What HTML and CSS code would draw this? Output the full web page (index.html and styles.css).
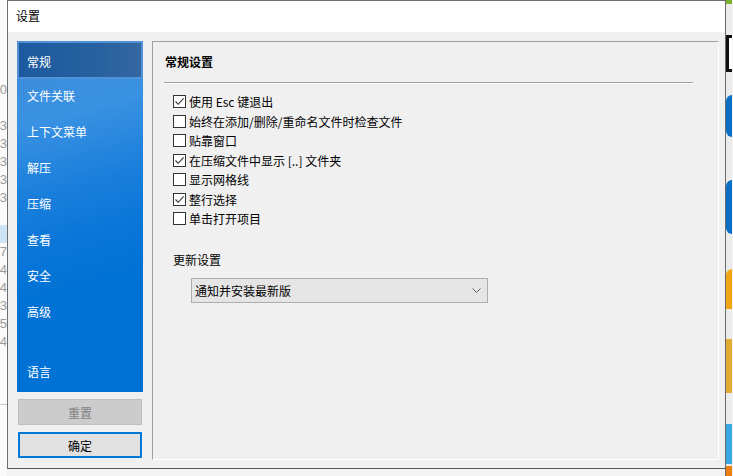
FILE: index.html
```html
<!DOCTYPE html>
<html lang="zh-CN">
<head>
<meta charset="utf-8">
<title>设置</title>
<link rel="stylesheet" href="styles.css">
</head>
<body>
<div class="desktop">
  <div class="bg-left">
    <div class="bg-row"><span>20</span></div>
    <div class="bg-row"><span></span></div>
    <div class="bg-row"><span>03</span></div>
    <div class="bg-row"><span>03</span></div>
    <div class="bg-row"><span>03</span></div>
    <div class="bg-row"><span>03</span></div>
    <div class="bg-row"><span>03</span></div>
    <div class="bg-row"><span></span></div>
    <div class="bg-row sel"><span></span></div>
    <div class="bg-row"><span>07</span></div>
    <div class="bg-row"><span>04</span></div>
    <div class="bg-row"><span>04</span></div>
    <div class="bg-row"><span>03</span></div>
    <div class="bg-row"><span>05</span></div>
    <div class="bg-row"><span>04</span></div>
    <div class="bg-end"></div>
  </div>

  <div class="dialog">
    <div class="titlebar">设置</div>
    <div class="dlg-body">
      <div class="side">
        <nav class="nav">
          <div class="nav-item active">常规</div>
          <div class="nav-item">文件关联</div>
          <div class="nav-item">上下文菜单</div>
          <div class="nav-item">解压</div>
          <div class="nav-item">压缩</div>
          <div class="nav-item">查看</div>
          <div class="nav-item">安全</div>
          <div class="nav-item">高级</div>
          <div class="nav-item lang">语言</div>
        </nav>
        <button class="btn btn-disabled">重置</button>
        <button class="btn btn-default">确定</button>
      </div>

      <section class="group">
        <h2 class="group-title">常规设置</h2>
        <div class="sep"></div>
        <ul class="checks">
          <li class="check"><span class="box"><svg viewBox="0 0 13 13" width="13" height="13"><polyline points="2.5,6.5 5.2,9.3 10.6,3.4" fill="none" stroke="#333" stroke-width="1.1"/></svg></span>使用 Esc 键退出</li>
          <li class="check"><span class="box"></span>始终在添加/删除/重命名文件时检查文件</li>
          <li class="check"><span class="box"></span>贴靠窗口</li>
          <li class="check"><span class="box"><svg viewBox="0 0 13 13" width="13" height="13"><polyline points="2.5,6.5 5.2,9.3 10.6,3.4" fill="none" stroke="#333" stroke-width="1.1"/></svg></span>在压缩文件中显示 [..] 文件夹</li>
          <li class="check"><span class="box"></span>显示网格线</li>
          <li class="check"><span class="box"><svg viewBox="0 0 13 13" width="13" height="13"><polyline points="2.5,6.5 5.2,9.3 10.6,3.4" fill="none" stroke="#333" stroke-width="1.1"/></svg></span>整行选择</li>
          <li class="check"><span class="box"></span>单击打开项目</li>
        </ul>
        <div class="update-label">更新设置</div>
        <div class="select">
          <span>通知并安装最新版</span>
          <svg class="chev" viewBox="0 0 9 5" width="9" height="5"><polyline points="0.5,0.5 4.5,4.5 8.5,0.5" fill="none" stroke="#606060" stroke-width="1"/></svg>
        </div>
      </section>
    </div>
  </div>

  <div class="bg-right">
    <div class="ic ic-green"></div>
    <div class="ic ic-box"></div>
    <div class="ic ic-blue1"></div>
    <div class="ic ic-blue2"></div>
    <div class="ic ic-orange"></div>
    <div class="ic ic-gold"></div>
    <div class="ic ic-sky"></div>
    <div class="ic ic-bottom"></div>
  </div>
</div>
</body>
</html>
```

FILE: styles.css
```css
* { box-sizing: border-box; }
html, body { margin: 0; padding: 0; }
body {
  width: 733px;
  height: 476px;
  overflow: hidden;
  background: #f3f3f3;
  font-family: "Noto Sans CJK SC", "Noto Sans", "Liberation Sans", sans-serif;
  font-size: 12px;
  color: #000;
}
.desktop {
  display: flex;
  width: 733px;
  height: 476px;
}

/* background strips */
.bg-left {
  width: 7px;
  flex: none;
  background: #fafafa;
  padding-top: 81px;
  overflow: hidden;
}
.bg-row {
  height: 18px;
  display: flex;
  justify-content: flex-end;
  overflow: hidden;
  color: #9a9a9a;
  font-family: "Liberation Sans", sans-serif;
  font-size: 13px;
  line-height: 18px;
}
.bg-row span { flex: none; }
.bg-row.sel { background: #cde3f6; }
.bg-end {
  height: 1px;
  margin-top: 53px;
  background: #c8c8c8;
}

.bg-right {
  width: 7px;
  flex: none;
  background: #ececec;
  display: flex;
  flex-direction: column;
  border-left: 1px solid #6a6a6a;
}
.ic { flex: none; }
.ic-green { height: 4px; background: #7bb32e; margin-bottom: 31px; }
.ic-box { height: 37px; border: 3px solid #111; border-right: none; background: #fff; margin-bottom: 23px; }
.ic-blue1 { height: 42px; background: #0b6fc6; border-radius: 20px 0 0 20px; margin-bottom: 43px; }
.ic-blue2 { height: 54px; background: #0b6fc6; border-radius: 26px 0 0 26px; margin-bottom: 35px; }
.ic-orange { height: 40px; background: #f1a414; border-radius: 6px 0 0 0; margin-bottom: 30px; }
.ic-gold { height: 54px; background: #e0ac34; margin-bottom: 31px; }
.ic-sky { height: 40px; background: #3aa9e2; }
.ic-bottom { flex: 1; background: #ed7e12; margin-top: 2px; }

/* dialog window */
.dialog {
  width: 718px;
  height: 469px;
  flex: none;
  border: 1px solid #6e6e6e;
  border-right: none;
  border-bottom-color: #555;
  background: #f0f0f0;
  display: flex;
  flex-direction: column;
}
.titlebar {
  height: 31px;
  flex: none;
  background: #fff;
  padding-left: 8px;
  line-height: 29px;
  font-size: 12px;
}
.dlg-body {
  flex: 1;
  display: flex;
  gap: 9px;
  padding: 9px 0 0 9px;
}

/* sidebar */
.side {
  width: 126px;
  flex: none;
  display: flex;
  flex-direction: column;
  align-items: center;
}
.nav {
  width: 126px;
  height: 351px;
  background: linear-gradient(165deg, #3f8ad6 0%, #3a92e2 22%, #1c80dc 40%, #0a76d8 55%, #0072d5 70%);
  display: flex;
  flex-direction: column;
  padding-top: 0;
}
.nav-item {
  height: 36px;
  flex: none;
  padding-left: 10px;
  line-height: 36px;
  color: #fff;
  font-size: 12px;
}
.nav-item.active {
  height: 38px;
  line-height: 38px;
  margin-bottom: -1px;
  background: linear-gradient(90deg, #1c5a9f 0%, #26609f 60%, #3567a2 100%);
  border: 2px solid #4f92d8;
  padding-left: 8px;
}
.nav-item.lang { margin-top: 24px; }

.btn {
  width: 124px;
  height: 26px;
  font-family: inherit;
  font-size: 12px;
  padding: 0;
}
.btn-disabled {
  margin-top: 7px;
  background: #cccccc;
  border: 1px solid #bfbfbf;
  color: #838383;
}
.btn-default {
  margin-top: 7px;
  background: #e1e1e1;
  border: 2px solid #0078d7;
  color: #000;
}

/* group box */
.group {
  width: 567px;
  height: 419px;
  flex: none;
  border-top: 1px solid #a0a0a0;
  border-left: 1px solid #a0a0a0;
  border-right: 1px solid #ffffff;
  border-bottom: 1px solid #ffffff;
  padding: 0;
}
.group-title {
  margin: 10px 0 0 12px;
  font-size: 12px;
  font-weight: bold;
  line-height: 20px;
}
.sep {
  margin: 10px 25px 0 11px;
  height: 2px;
  border-top: 1px solid #a0a0a0;
  border-bottom: 1px solid #ffffff;
}
.checks {
  list-style: none;
  margin: 8px 0 0 0;
  padding: 0 0 0 20px;
}
.check {
  height: 19.5px;
  display: flex;
  align-items: center;
  gap: 3px;
  line-height: 19px;
}
.box {
  width: 13px;
  height: 13px;
  flex: none;
  border: 1px solid #333;
  background: #fff;
  position: relative;
}
.box svg {
  position: absolute;
  left: -1px;
  top: -1px;
}
.update-label {
  margin: 21px 0 0 20px;
  line-height: 20px;
}
.select {
  margin: 8px 0 0 38px;
  width: 297px;
  height: 25px;
  background: #e5e5e5;
  border: 1px solid #adadad;
  display: flex;
  align-items: center;
  justify-content: space-between;
  padding: 0 6px 0 3px;
}
.chev { flex: none; }
```
